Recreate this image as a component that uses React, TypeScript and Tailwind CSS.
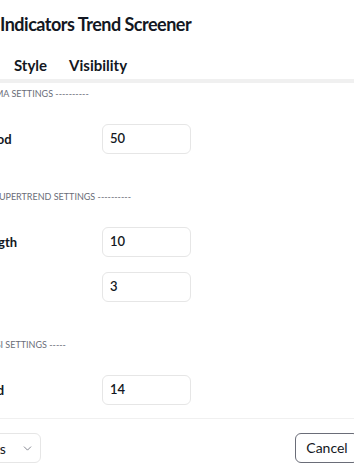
import { ChevronDown } from "lucide-react";

type Row = { label: string; value: string; labelClass?: string };
type Section = { title: string; indent: string; rows: Row[] };

// group titles sit at different offsets in the original (leading dashes), so each carries its own indent
const SECTIONS: Section[] = [
  { title: "MA SETTINGS ----------", indent: "pl-[45px]", rows: [{ label: "MA Period", value: "50" }] },
  {
    title: "SUPERTREND SETTINGS ----------",
    indent: "pl-[44px]",
    rows: [
      { label: "ATR Length", value: "10" },
      { label: "Factor", value: "3" }
    ]
  },
  {
    title: "RSI SETTINGS -----",
    indent: "pl-[40px]",
    rows: [{ label: "RSI Period", value: "14", labelClass: "-ml-[6px] w-[158px]" }]
  }
];

const InputRow = ({ label, value, labelClass = "w-[152px]" }: Row) => (
  <div className="flex h-[30px] items-center">
    <div className={`text-[13px] font-bold leading-[18px] whitespace-nowrap text-[#131722] ${labelClass}`}>{label}</div>
    <div className="flex h-[30px] w-[89px] items-center rounded-[6px] border border-[#e6e6e6] bg-white pl-[7px] text-[13px] font-semibold text-[#131722]">
      {value}
    </div>
  </div>
);

export default function App() {
  return (
    <div className="h-[472px] w-[354px] overflow-hidden bg-white font-['Lato',sans-serif] text-[#131722]">
      <div className="ml-[-70px] flex h-full w-[505px] flex-col">
        <h1 className="pl-[70px] pt-[10px] text-[18px] font-bold leading-[28px] tracking-[-0.5px] whitespace-nowrap">
          Indicators Trend Screener
        </h1>

        <nav className="mt-[17px] flex gap-[22px] border-b-4 border-[#f0f0f0] pb-1 pl-5 text-[15px] font-bold leading-[20px]">
          <span>Inputs</span>
          <span>Style</span>
          <span>Visibility</span>
        </nav>

        <div className="flex flex-1 flex-col pl-5">
          {SECTIONS.map((section, i) => (
            <div key={section.title} className={i === 0 ? "mt-1" : "mt-9"}>
              <div
                className={`h-[14px] whitespace-nowrap text-[9px] leading-[14px] text-[#6a6d78] ${section.indent}`}
              >
                {section.title}
              </div>
              <div className="mt-[23px] flex flex-col gap-[15px]">
                {section.rows.map((row) => (
                  <InputRow key={row.label} {...row} />
                ))}
              </div>
            </div>
          ))}
        </div>

        <footer className="flex items-center justify-between border-t border-[#f0f0f0] px-5 pb-[9px] pt-[14px]">
          <div className="flex h-[30px] w-[91px] items-center rounded-[6px] border border-[#e6e6e6] pl-[3px] pr-[6px] text-[14px]">
            <span>Defaults</span>
            <ChevronDown size={13} strokeWidth={1.5} className="ml-auto text-[#6a6d78]" />
          </div>
          <div className="flex gap-2">
            <button className="h-[30px] w-[64px] rounded-[6px] border border-[#6a6d78] text-[14px] leading-[20px]">
              Cancel
            </button>
            <button className="h-[30px] w-[48px] rounded-[6px] bg-[#131722] text-[14px] text-white">Ok</button>
          </div>
        </footer>
      </div>
    </div>
  );
}
